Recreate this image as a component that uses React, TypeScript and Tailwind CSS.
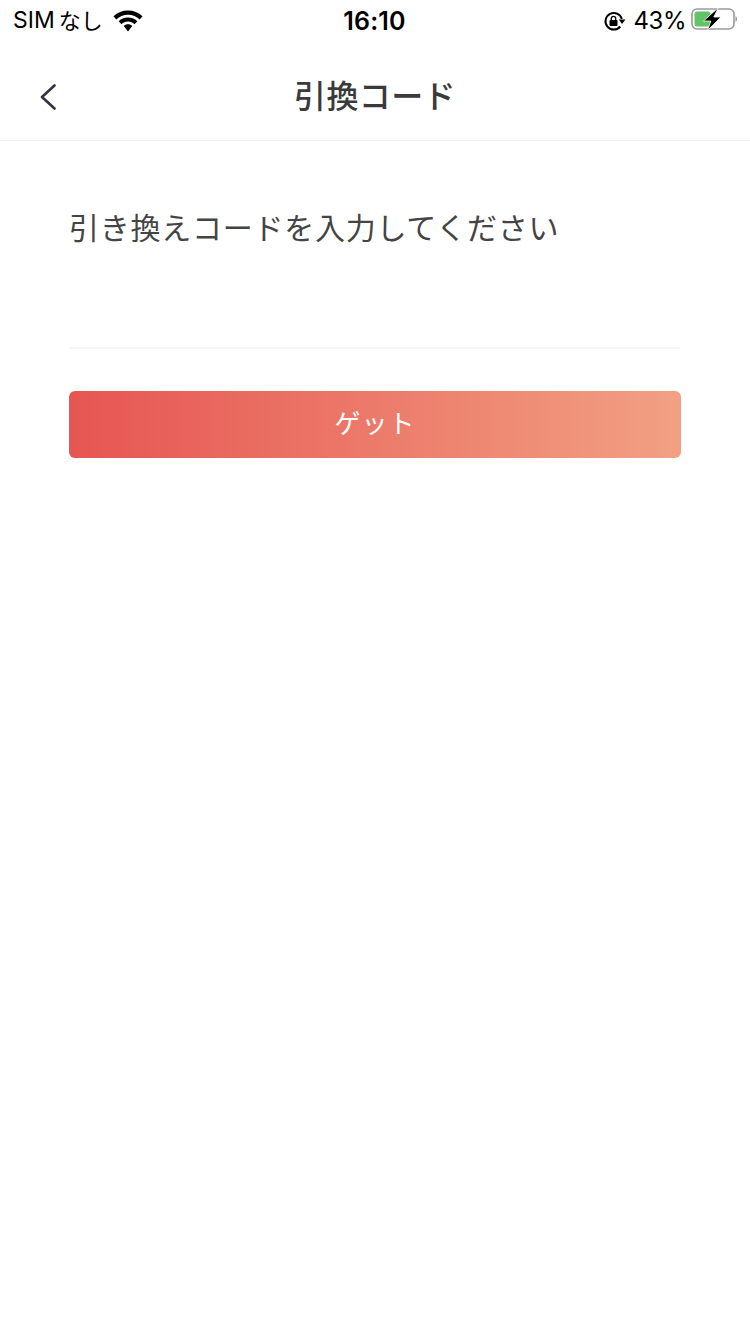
const JP = { fontFamily: '"Noto Sans CJK JP", Inter, sans-serif' };

export default function App() {
  return (
    <div className="w-[750px] h-[1334px] bg-white flex flex-col overflow-hidden" style={JP}>
      <div className="h-[40px] flex items-center justify-between pl-[13px] pr-[13px] text-black">
        <div className="flex-1 flex items-center gap-[10px]">
          <span className="text-[22px] leading-none flex items-center gap-[4px] mt-[1px]">
            <span className="text-[23px] leading-none" style={{ fontFamily: 'Inter, sans-serif' }}>SIM</span>
            <span className="leading-none mb-[3px]">なし</span>
          </span>
          <svg className="mb-[-1px]" width="30" height="22" viewBox="0 0 30 22">
            <path d="M15 .5C9.300.500 4.500 2.500.500 6.300L3.300 9.400C6.400 6.300 10.500 4.700 15 4.700S23.600 6.300 26.700 9.400L29.500 6.300C25.500 2.500 20.700.500 15 .5Z" fill="#000" />
            <path d="M15 7.500C11.400 7.500 8.200 8.800 5.700 11.200L8.500 14.200C10.200 12.600 12.500 11.600 15 11.600S19.800 12.600 21.500 14.200L24.300 11.200C21.800 8.800 18.600 7.500 15 7.500Z" fill="#000" />
            <path d="M15 14.300C13.300 14.300 11.900 14.900 10.700 16L15 21.500L19.300 16C18.100 14.900 16.700 14.300 15 14.300Z" fill="#000" />
          </svg>
        </div>
        <span className="text-[25px] font-semibold leading-none mr-[1px] mt-[2px] tracking-[0.2px]" style={{ fontFamily: 'Inter, sans-serif' }}>16:10</span>
        <div className="flex-1 flex items-center justify-end">
          <svg className="mr-[8px] mt-[1px]" width="23" height="22" viewBox="0 0 23 22">
            <path d="M17.300 16.500A8.300 8.300 0 1 1 18.800 9" fill="none" stroke="#000" strokeWidth="2" />
            <path d="M15.800 9.500H22.500L19 14Z" fill="#000" />
            <rect x="6.500" y="10" width="8" height="6" rx="1" fill="#000" />
            <path d="M8.300 10V8.500a2.200 2.200 0 0 1 4.400 0V10" fill="none" stroke="#000" strokeWidth="1.300" />
          </svg>
          <span className="text-[24px] leading-none mr-[5px] mt-[2px] tracking-[-0.5px]" style={{ fontFamily: 'Inter, sans-serif' }}>43%</span>
          <svg className="mb-[2px]" width="46" height="24" viewBox="0 0 46 24">
            <rect x="1" y="2" width="42" height="20" rx="5" fill="none" stroke="#9a9a9a" strokeWidth="1.600" />
            <rect x="3.500" y="4.500" width="16" height="15" rx="2.500" fill="#62c466" />
            <path d="M44.500 9c1 .5 1.500 1.700 1.500 3s-.5 2.500-1.500 3Z" fill="#9a9a9a" />
            <path d="M27.500 0.500 12.500 14H19.800L16.500 23.500 30 10H22.800Z" fill="#000" stroke="#fff" strokeWidth="0.800" />
          </svg>
        </div>
      </div>

      <div className="relative h-[101px] flex items-center justify-center border-b border-[#eeeeee]">
        <svg className="absolute left-[39px] top-[44px]" width="18" height="26" viewBox="0 0 18 26">
          <path d="M15.500 1.500 3 13 15.500 24.500" fill="none" stroke="#2f3440" strokeWidth="2.600" strokeLinecap="round" strokeLinejoin="round" />
        </svg>
        <h1 className="text-[32px] font-medium text-[#3a3a3a] leading-none mt-[8px] tracking-[0.4px]">引換コード</h1>
      </div>

      <div className="px-[69px] pt-[66px] flex flex-col">
        <p className="text-[30px] leading-[38px] text-[#444444] tracking-[0.75px] whitespace-nowrap">引き換えコードを入力してください</p>
        <div className="h-[2px] bg-[#f5f5f5] mt-[102px] w-[611px]" />
        <button className="mt-[42px] h-[67px] w-[612px] rounded-[6px] bg-linear-to-r/srgb from-[#e65552] to-[#f2a083] text-white text-[26px] tracking-[1px] flex items-center justify-center pb-[6px]">
          ゲット
        </button>
      </div>
    </div>
  );
}
